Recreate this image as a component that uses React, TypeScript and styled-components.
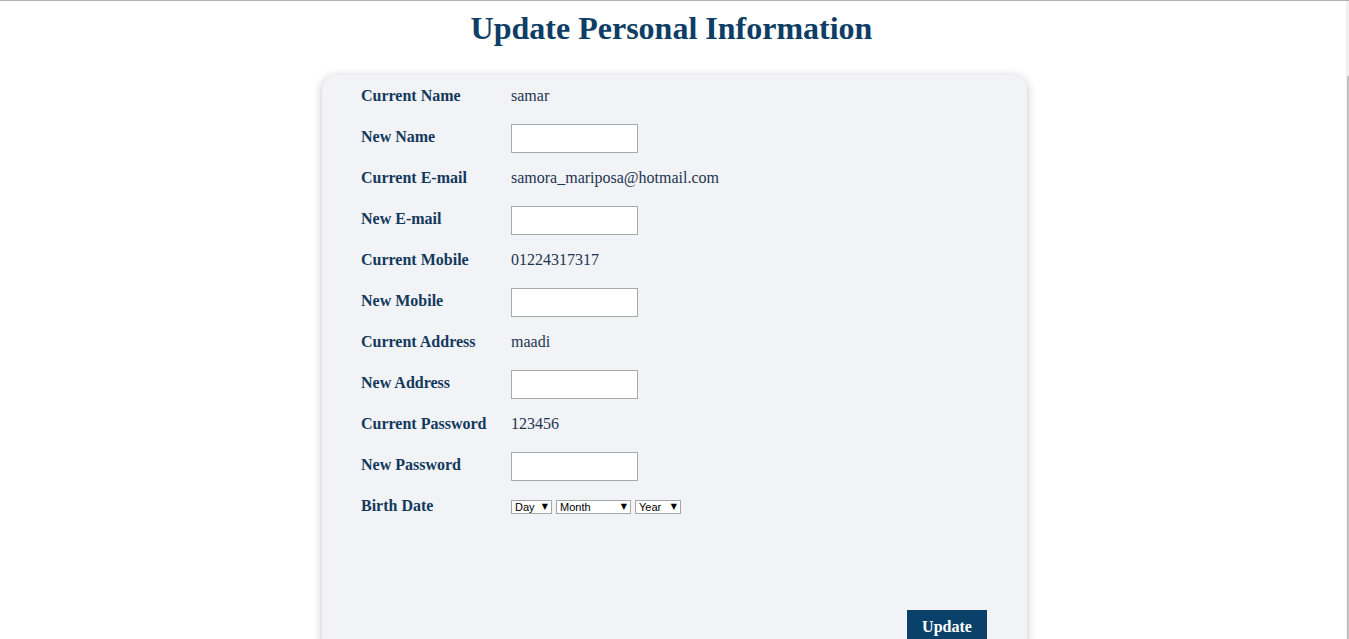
import React from "react";
import styled, { createGlobalStyle } from "styled-components";

const Global = createGlobalStyle`
  html, body { margin: 0; padding: 0; overflow: hidden; background: #ffffff; }
  body { font-family: "Liberation Serif", "Times New Roman", serif; }
  * { box-sizing: border-box; }
`;

const Page = styled.div`
  width: 100%;
  height: 639px;
  display: flex;
  flex-direction: column;
  align-items: center;
`;

const TopLine = styled.div`
  position: fixed;
  left: 0;
  top: 0;
  right: 0;
  height: 1px;
  background: #b3b3b3;
`;

const ScrollTrack = styled.div`
  position: fixed;
  top: 1px;
  right: 0;
  width: 3px;
  bottom: 0;
  background: #f0f0f0;
`;

const ScrollThumb = styled.div`
  position: absolute;
  top: 75px;
  right: 0;
  width: 2px;
  bottom: 0;
  background: #c1c1c1;
`;

const Title = styled.h1`
  margin: 0;
  padding: 8px 6px 0 0;
  font-size: 32px;
  line-height: 40px;
  font-weight: bold;
  color: #0e3d66;
  text-align: center;
`;

const Panel = styled.div`
  margin-top: 27px;
  width: 705px;
  height: 620px;
  flex-shrink: 0;
  background: #f2f3f7;
  border-radius: 15px;
  box-shadow: 0 2px 10px rgba(70, 30, 70, 0.3);
  padding: 0 40px 0 39px;
  display: flex;
  flex-direction: column;
`;

const Form = styled.div`
  display: grid;
  grid-template-columns: 150px 1fr;
  grid-auto-rows: 41px;
  align-items: center;
`;

const Label = styled.div`
  font-size: 16px;
  font-weight: bold;
  color: #13395c;
`;

const Value = styled.div`
  font-size: 16px;
  color: #1d3550;
`;

const Input = styled.input`
  display: block;
  width: 127px;
  height: 29px;
  border: 1px solid #a9a9a9;
  background: #ffffff;
  margin: 4px 0 0 0;
  padding: 0 4px;
`;

const Selects = styled.div`
  display: flex;
  gap: 4px;
  align-items: center;
  margin-top: 2px;
`;

const SelectBox = styled.div<{ $w: number }>`
  width: ${(p) => p.$w}px;
  height: 14px;
  border: 1px solid #a6a6a6;
  background: #ffffff;
  display: flex;
  align-items: center;
  justify-content: space-between;
  padding: 0 3px 0 3px;
  font-family: "Liberation Sans", Arial, sans-serif;
  font-size: 11px;
  line-height: 12px;
  color: #000;
`;

const Arrow = styled.span`
  font-family: "DejaVu Sans", sans-serif;
  font-size: 8px;
  line-height: 12px;
`;

const ButtonRow = styled.div`
  display: flex;
  justify-content: flex-end;
  margin-top: 84px;
`;

const Button = styled.button`
  width: 80px;
  height: 34px;
  border: none;
  background: #0a416a;
  color: #ffffff;
  font-family: "Liberation Serif", "Times New Roman", serif;
  font-size: 16px;
  font-weight: bold;
  padding: 0;
  margin: 0;
`;

const rows: { label: string; value?: string }[] = [
  { label: "Current Name", value: "samar" },
  { label: "New Name" },
  { label: "Current E-mail", value: "samora_mariposa@hotmail.com" },
  { label: "New E-mail" },
  { label: "Current Mobile", value: "01224317317" },
  { label: "New Mobile" },
  { label: "Current Address", value: "maadi" },
  { label: "New Address" },
  { label: "Current Password", value: "123456" },
  { label: "New Password" },
];

export default function App() {
  return (
    <>
      <Global />
      <TopLine />
      <ScrollTrack>
        <ScrollThumb />
      </ScrollTrack>
      <Page>
        <Title>Update Personal Information</Title>
        <Panel>
          <Form>
            {rows.map((r) => (
              <React.Fragment key={r.label}>
                <Label>{r.label}</Label>
                {r.value !== undefined ? (
                  <Value>{r.value}</Value>
                ) : (
                  <div>
                    <Input type="text" />
                  </div>
                )}
              </React.Fragment>
            ))}
            <Label>Birth Date</Label>
            <Selects>
              <SelectBox $w={41}>
                <span>Day</span>
                <Arrow>▼</Arrow>
              </SelectBox>
              <SelectBox $w={75}>
                <span>Month</span>
                <Arrow>▼</Arrow>
              </SelectBox>
              <SelectBox $w={46}>
                <span>Year</span>
                <Arrow>▼</Arrow>
              </SelectBox>
            </Selects>
          </Form>
          <ButtonRow>
            <Button>Update</Button>
          </ButtonRow>
        </Panel>
      </Page>
    </>
  );
}
